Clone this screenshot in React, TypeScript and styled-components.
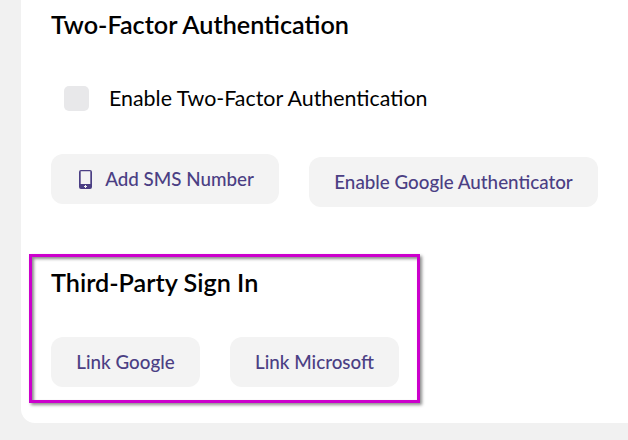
import React from 'react';
import styled, { createGlobalStyle } from 'styled-components';

const GlobalStyle = createGlobalStyle`
  * { box-sizing: border-box; }
  body { margin: 0; background: #f1f1f1; font-family: Lato, sans-serif; color: #000; overflow: hidden; }
`;

const Page = styled.main`
  height: 440px;
  padding-left: 21px;
  background: #f1f1f1;
`;

const Panel = styled.div`
  height: 423px;
  background: #fff;
  border-bottom-left-radius: 14px;
  padding: 8px 0 0 30px;
`;

const Heading = styled.h2`
  margin: 0;
  font-size: 25.2px;
  font-weight: 600;
  line-height: 32px;
  white-space: nowrap;
`;

const CheckRow = styled.label`
  display: flex;
  align-items: center;
  gap: 20px;
  margin: 43px 0 0 13px;
  height: 30px;
  font-size: 21.4px;
  line-height: 26px;
  white-space: nowrap;
`;

const Box = styled.span`
  width: 25px;
  height: 25px;
  border-radius: 5px;
  background: #e8e8ea;
`;

const ButtonRow = styled.div`
  display: flex;
  align-items: flex-start;
  gap: 30px;
`;

const FactorButtons = styled(ButtonRow)`
  margin-top: 41px;
`;

const Button = styled.button<{ $width: number; $drop?: number }>`
  display: flex;
  align-items: center;
  justify-content: center;
  flex: none;
  gap: 13px;
  width: ${(p) => p.$width}px;
  height: 50px;
  margin: ${(p) => p.$drop ?? 0}px 0 0;
  padding: 0;
  border: 0;
  border-radius: 12px;
  background: #f3f3f3;
  color: #4b3f84;
  font: 500 18.8px/24px Lato, sans-serif;
  white-space: nowrap;
`;

const PhoneButton = styled(Button)`
  padding-left: 3px;
`;

const Highlight = styled.section`
  width: 391px;
  height: 149px;
  margin: 47px 0 0 -22px;
  padding: 9px 0 0 19px;
  border: 3px solid #cc00cc;
  box-shadow: 2px 2px 3px rgba(0, 0, 0, 0.45), inset 2px 2px 3px rgba(0, 0, 0, 0.45);
`;

const LinkButtons = styled(ButtonRow)`
  margin-top: 39px;
`;

const PhoneIcon = () => (
  <svg width="13" height="19" viewBox="0 0 13 19">
    <path
      fill="currentColor"
      fillRule="evenodd"
      d="M2 0h9a2 2 0 0 1 2 2v15a2 2 0 0 1-2 2H2a2 2 0 0 1-2-2V2a2 2 0 0 1 2-2zM1.7 1.3v12.7h9.6V1.3zM6 15v1H5v1h1v1h1v-1h1v-1H7v-1z"
    />
  </svg>
);

export default function App() {
  return (
    <>
      <GlobalStyle />
      <Page>
        <Panel>
          <Heading>Two-Factor Authentication</Heading>
          <CheckRow>
            <Box />
            <span>Enable Two-Factor Authentication</span>
          </CheckRow>
          <FactorButtons>
            <PhoneButton $width={228}><PhoneIcon />Add SMS Number</PhoneButton>
            <Button $width={289} $drop={3}>Enable Google Authenticator</Button>
          </FactorButtons>
          <Highlight>
            <Heading>Third-Party Sign In</Heading>
            <LinkButtons>
              <Button $width={149}>Link Google</Button>
              <Button $width={169}>Link Microsoft</Button>
            </LinkButtons>
          </Highlight>
        </Panel>
      </Page>
    </>
  );
}
